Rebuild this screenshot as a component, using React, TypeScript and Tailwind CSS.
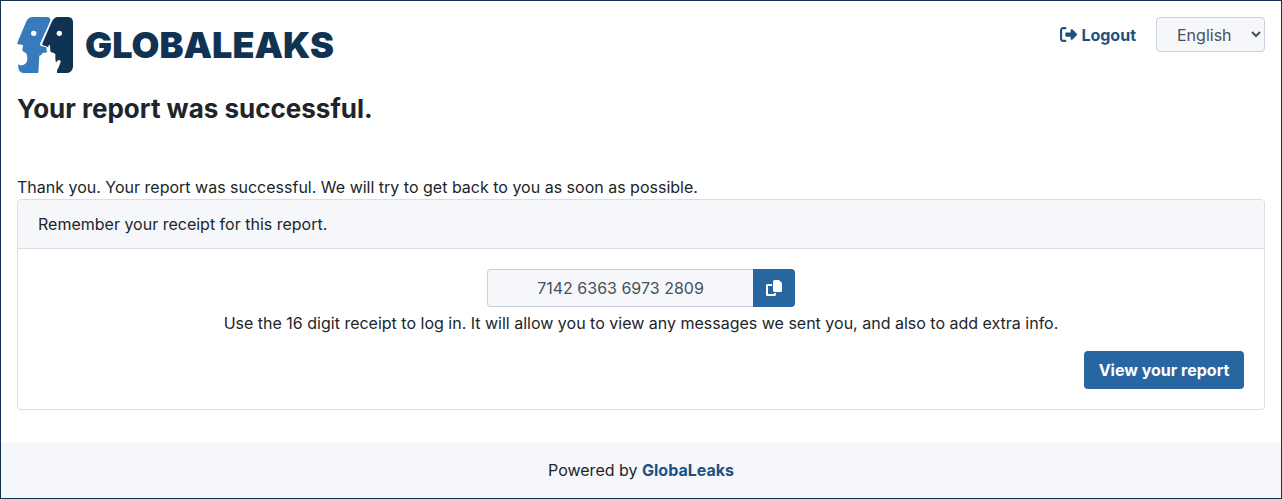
import { FaRightFromBracket } from "react-icons/fa6";

function Logo() {
  return (
    <a href="#" aria-label="GlobaLeaks" className="flex items-center gap-3 text-[#103253]">
      <svg viewBox="0 0 168 168" className="size-14" aria-hidden="true">
        <path
          fill="#377bbc"
          d="M44 0H88Q104 0 99 14L70 78Q67 85 74 88L86 90Q91 92 88 98L91 104Q86 108 76 108L74 113L67 116L64 168H18Q4 165 4 150L3 142Q10 148 20 143Q32 138 31 122Q30 106 20 104L16 100L18 84L1 81Q0 79 2 75L25 20Q31 2 44 0Z"
        />
        <path
          fill="#103253"
          d="M120 0H154Q168 1 168 16V150Q166 165 152 168H120Q119 158 125 151L131 135Q132 129 126 129Q120 130 117 137Q114 127 115 111Q108 105 101 106Q99 96 99 85L95 84L94 91Q85 86 76 84Q75 80 78 75L101 22Q108 3 120 0Z"
        />
        <circle cx="50" cy="49" r="8" fill="#fff" />
        <circle cx="127" cy="49" r="8" fill="#fff" />
      </svg>
      <span className="text-4xl leading-none font-black">GLOBALEAKS</span>
    </a>
  );
}

function CopyIcon() {
  return (
    <svg viewBox="0 0 16 16" className="size-4" aria-hidden="true">
      <path fill="currentColor" d="M8.5 0H13L16 3V10.500Q16 12 14.500 12H8.500Q7 12 7 10.500V1.500Q7 0 8.500 0Z" />
      <path fill="none" stroke="currentColor" strokeWidth="2" d="M6 5H1.500Q1 5 1 5.500V14.500Q1 15 1.500 15H8.500Q9 15 9 14.500V13" />
    </svg>
  );
}

export default function App() {
  return (
    <div className="flex min-h-screen flex-col border border-[#103253] bg-white font-['Inter',sans-serif] text-base text-[#212529]">
      <header className="flex items-start justify-between px-4 pt-4">
        <Logo />
        <div className="flex items-center gap-5">
          <a href="#" className="flex items-center gap-1 font-bold text-[#1d5083]">
            <FaRightFromBracket aria-hidden="true" className="size-[17px]" />
            Logout
          </a>
          <select
            aria-label="Language"
            className="h-[35px] w-[109px] rounded border border-[#c8d0e0] bg-[#f5f7fb] pl-4 text-[#495057]"
          >
            <option>English</option>
          </select>
        </div>
      </header>

      <main className="flex-1 px-4 pt-4 pb-8">
        <h1 className="mb-[46px] text-[26px] leading-10 font-bold">Your report was successful.</h1>
        <p>Thank you. Your report was successful. We will try to get back to you as soon as possible.</p>
        <section className="rounded border border-[#dcdddf]">
          <h2 className="rounded-t border-b border-[#dcdddf] bg-[#f5f7fb] px-5 py-3">
            Remember your receipt for this report.
          </h2>
          <div className="p-5">
            <div className="mx-auto flex h-[38px] w-[308px]">
              <input
                aria-label="Receipt"
                readOnly
                value="7142 6363 6973 2809"
                className="min-w-0 flex-1 rounded-l border border-r-0 border-[#c8d0e0] bg-[#f5f7fb] text-center text-[#495057]"
              />
              <button
                type="button"
                aria-label="Copy receipt"
                className="flex w-[42px] items-center justify-center rounded-r bg-[#2866a2] text-white"
              >
                <CopyIcon />
              </button>
            </div>
            <p className="mt-1 text-center">
              Use the 16 digit receipt to log in. It will allow you to view any messages we sent you, and also to add
              extra info.
            </p>
            <div className="mt-4 flex justify-end">
              <button type="button" className="h-[38px] min-w-40 rounded bg-[#2866a2] px-3 font-bold text-white">
                View your report
              </button>
            </div>
          </div>
        </section>
      </main>

      <footer className="bg-[#f5f7fb] p-4 text-center">
        Powered by{" "}
        <a href="#" className="font-bold text-[#1d5083]">
          GlobaLeaks
        </a>
      </footer>
    </div>
  );
}
